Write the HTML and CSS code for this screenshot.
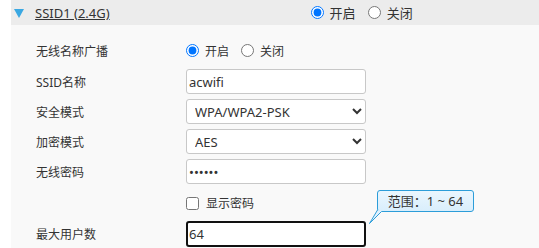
FILE: index.html
```html
<!DOCTYPE html>
<html lang="zh-CN">
<head>
    <meta charset="UTF-8">
    <title>无线设置</title>
    <link rel="stylesheet" href="styles.css">
</head>
<body>

<div class="panel">
    <div class="panel-head">
        <span class="caret"></span>
        <a class="ssid-title" href="#">SSID1 (2.4G)</a>
        <div class="radio-group head-radios">
            <label><input type="radio" name="ssid1" checked> 开启</label>
            <label><input type="radio" name="ssid1"> 关闭</label>
        </div>
    </div>

    <div class="panel-body">
        <div class="form-row radio-row">
            <span class="row-label">无线名称广播</span>
            <div class="radio-group">
                <label><input type="radio" name="bcast" checked> 开启</label>
                <label><input type="radio" name="bcast"> 关闭</label>
            </div>
        </div>

        <div class="form-row">
            <span class="row-label">SSID名称</span>
            <input class="field" type="text" value="acwifi">
        </div>

        <div class="form-row">
            <span class="row-label">安全模式</span>
            <select class="field">
                <option>WPA/WPA2-PSK</option>
            </select>
        </div>

        <div class="form-row">
            <span class="row-label">加密模式</span>
            <select class="field">
                <option>AES</option>
            </select>
        </div>

        <div class="form-row">
            <span class="row-label">无线密码</span>
            <input class="field" type="password" value="123456">
        </div>

        <div class="form-row check-row">
            <span class="row-label"></span>
            <label class="check"><input type="checkbox"> 显示密码</label>
        </div>

        <div class="form-row">
            <span class="row-label">最大用户数</span>
            <div class="field-wrap">
                <input class="field field-active" type="text" value="64">
                <div class="tip">
                    范围：1 ~ 64
                    <svg class="tip-tail" width="14" height="14" viewBox="0 0 14 14">
                        <polygon points="9,0 13,1 1,13" fill="#e1f1fd"/>
                        <polyline points="8.5,0 0.5,13.5 12.5,1.5" fill="none" stroke="#2c9dd9" stroke-width="1"/>
                    </svg>
                </div>
            </div>
        </div>
    </div>
</div>

</body>
</html>
```

FILE: styles.css
```css
body { margin: 0; background: #fff; font-family: "Noto Sans", "Noto Sans CJK SC", sans-serif; font-size: 12px; color: #333; }

.panel { margin-left: 11px; background: #f9f9f9; min-height: 248px; }

/* --- Header --- */
.panel-head { height: 25px; background: #ececec; display: flex; align-items: center; font-size: 13px; }
.caret { width: 0; height: 0; border-left: 5px solid transparent; border-right: 5px solid transparent; border-top: 9px solid #3aa8e2; margin-left: 3px; margin-right: 11px; margin-top: 1px; }
.ssid-title { color: #333; text-decoration: underline; }
.head-radios { margin-left: 201px; }

/* --- Radios --- */
.radio-group { display: flex; gap: 12px; }
.radio-group label { display: flex; align-items: center; }
.radio-group input, .check input { width: 13px; height: 13px; margin: 0 6px 0 0; }

/* --- Rows --- */
.panel-body { padding-top: 12px; }
.form-row { display: flex; align-items: center; height: 25px; margin-bottom: 5px; }
.row-label { width: 150px; padding-left: 25px; flex: none; }
.radio-row { height: 27px; }
.check-row { height: 28px; margin-bottom: 4px; }
.check { display: flex; align-items: center; }
.check input { margin-right: 7px; }

/* --- Fields --- */
.field { width: 180px; height: 25px; box-sizing: border-box; border: 1px solid #c8c8c8; border-radius: 3px; background: #fff; font-family: inherit; font-size: 13px; color: #333; padding: 0 2px; outline: none; }
select.field { padding: 0 4px; }
.field-wrap { position: relative; }
.field-active { height: 26px; border: 2px solid #111; border-radius: 3px; padding: 0 1px; }

/* --- Tooltip --- */
.tip { position: absolute; left: 191px; top: -31px; width: 97px; height: 22px; box-sizing: border-box; border: 1px solid #2c9dd9; border-radius: 3px; background: linear-gradient(#eaf6fe, #d9eefc); text-align: center; line-height: 20px; white-space: nowrap; font-size: 13px; }
.tip-tail { position: absolute; left: -9px; bottom: -13px; }
```
